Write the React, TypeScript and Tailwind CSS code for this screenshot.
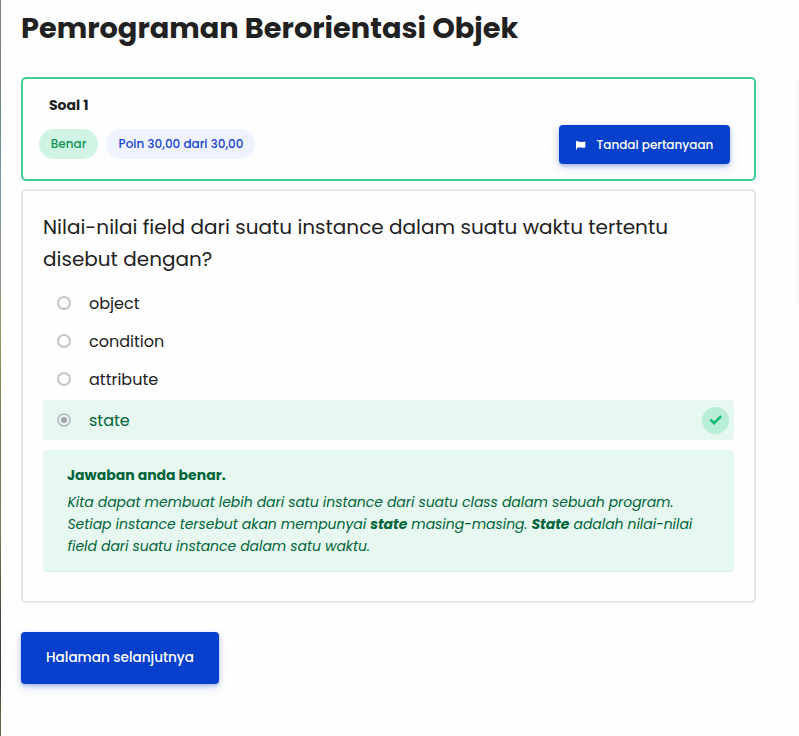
import React from "react";

type OptionProps = { label: string };

function Option({ label }: OptionProps) {
  return (
    <label className="flex h-[38px] items-center pl-[14px]">
      <span className="size-[14px] rounded-full border-2 border-[#c5c4cb] bg-white" />
      <span className="ml-[18px] pt-[2px] text-[16px] leading-6">{label}</span>
    </label>
  );
}

export default function App() {
  return (
    <div className="flex h-[736px] w-[799px] overflow-hidden bg-[#fefefe] font-['Poppins','Inter',sans-serif] text-[#212121]">
      <div className="w-px shrink-0 bg-[linear-gradient(to_bottom,#8c7f86_0%,#708087_13%,#7199a4_25%,#938b8e_37%,#92935f_46%,#74764f_60%,#7d7a58_72%,#48483c_84%,#343632_92%,#66634a_97%)]" />
      <main className="ml-5 w-[735px] shrink-0">
        <h1 className="mt-[10px] h-9 whitespace-nowrap text-[28.8px] font-bold leading-9">
          Pemrograman Berorientasi Objek
        </h1>

        <section className="mt-[31px] flex h-[104px] justify-between rounded-[5px] border-2 border-[#3dcf93] bg-[#fefefe] pl-4 pr-6">
          <div>
            <h2 className="ml-[10px] mt-[16px] h-5 whitespace-nowrap text-[14px] font-bold leading-5">Soal 1</h2>
            <div className="mt-[14px] flex gap-2">
              <span className="flex h-[30px] w-[59px] items-center justify-center rounded-full bg-[#cff4e4] text-[12px] font-medium text-[#14965c]">
                Benar
              </span>
              <span className="flex h-[30px] w-[149px] items-center whitespace-nowrap rounded-full bg-[#eff3ff] pl-[12.5px] text-[12px] font-medium text-[#1545cf]">
                Poin 30,00 dari 30,00
              </span>
            </div>
          </div>
          <button className="mt-[46px] flex h-[39px] w-[171px] items-center rounded-[4px] bg-[#0540cd] pl-[17px] text-white shadow-[0_2px_4px_rgba(5,64,205,.3),0_4px_12px_rgba(5,64,205,.12)]">
            <svg viewBox="0 0 10 10" className="mt-px size-[10px]" fill="currentColor">
              <path d="M0 .8h1v.8C3 1 4.400 2.300 6 2.100c1.200-.1 2-.4 3.300-.6v6C7.600 8 6.400 7.900 5 7.600 3.500 7.300 2.400 7.300 1 7.800V9.500H0z" />
            </svg>
            <span className="ml-[10.5px] whitespace-nowrap pt-px text-[12px] font-medium">Tandai pertanyaan</span>
          </button>
        </section>

        <section className="mt-2 h-[414px] rounded-[5px] border-2 border-[#e6e6e6] bg-[#fefefe] px-5 pt-5">
          <p className="text-[20px] leading-8">
            Nilai-nilai field dari suatu instance dalam suatu waktu tertentu disebut dengan?
          </p>
          <div className="mt-[9px]">
            <Option label="object" />
            <Option label="condition" />
            <Option label="attribute" />
          </div>
          <label className="mt-[2px] flex h-10 items-center rounded-[4px] bg-[#e7f8f0] pl-[14px] pr-[5px] text-[#00643b]">
            <span className="flex size-[14px] items-center justify-center rounded-full border-2 border-[#b9c4c5] bg-[#eef3f2]">
              <span className="size-[6px] rounded-full bg-[#9ba5aa]" />
            </span>
            <span className="ml-[18px] flex-1 pt-[2px] text-[16px] leading-6">state</span>
            <span className="flex size-[27px] items-center justify-center rounded-full bg-[#b8edd6]">
              <svg viewBox="0 0 14 12" className="h-3 w-[14px]" fill="none" stroke="#12ba78" strokeWidth="2.600">
                <path d="m1.500 5.600 3.600 3.600 7-7" />
              </svg>
            </span>
          </label>
          <div className="mt-[10px] h-[122px] whitespace-nowrap rounded-[4px] border-b border-[#d0f0e1] bg-[#e7f8f0] px-6 pt-[14px] text-[14px] text-[#00643b]">
            <p className="h-[22px] font-bold leading-[22px]">Jawaban anda benar.</p>
            <div className="mt-[5px] pl-[0.5px] italic leading-[22px] tracking-[-0.055px]">
              <p>Kita dapat membuat lebih dari satu instance dari suatu class dalam sebuah program.</p>
              <p>Setiap instance tersebut akan mempunyai <b>state</b> masing-masing. <b>State</b> adalah nilai-nilai</p>
              <p>field dari suatu instance dalam satu waktu.</p>
            </div>
          </div>
        </section>

        <button className="mt-[29px] flex h-[52px] w-[198px] items-center justify-center whitespace-nowrap rounded-[4px] bg-[#0540cd] text-[13.6px] font-medium text-white shadow-[0_2px_4px_rgba(5,64,205,.3),0_4px_12px_rgba(5,64,205,.12)]">
          Halaman selanjutnya
        </button>
      </main>
      <aside className="ml-10 mt-[77px] h-[228px] w-10 shrink-0 rounded-[5px] bg-[#f8f8f8]" />
    </div>
  );
}
